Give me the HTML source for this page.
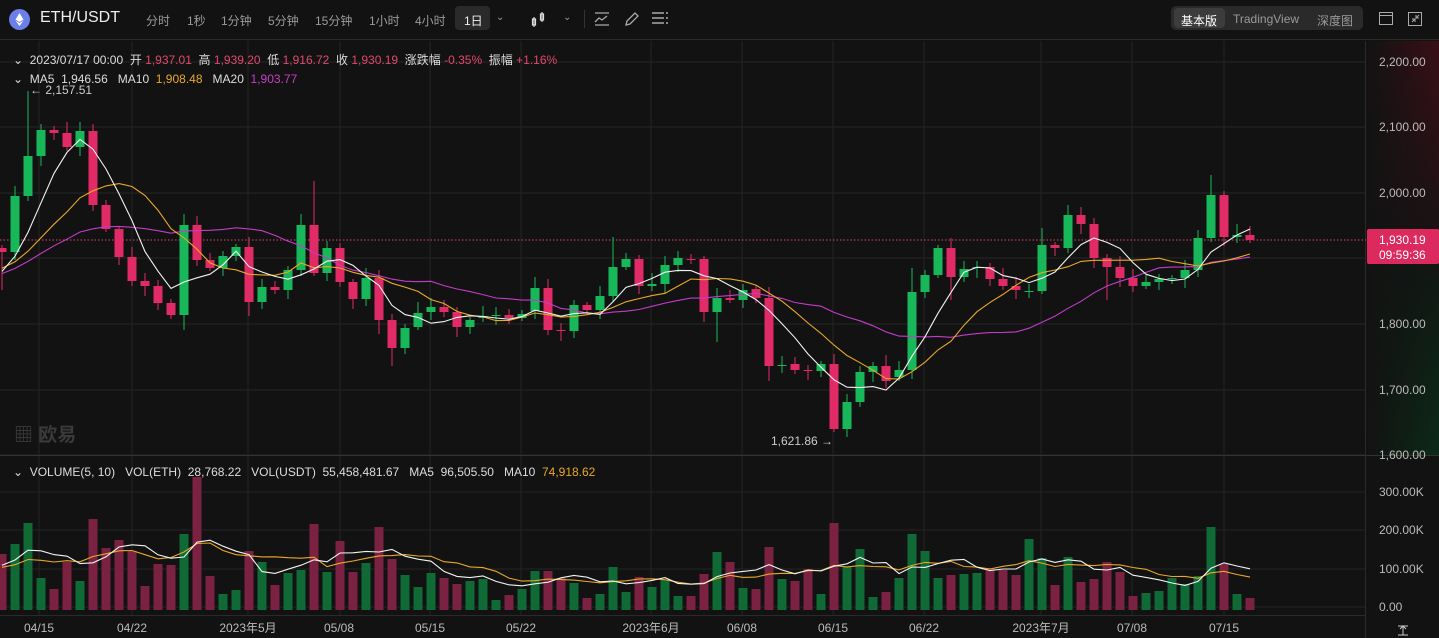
<!DOCTYPE html>
<html><head><meta charset="utf-8"><style>
*{margin:0;padding:0;box-sizing:border-box}
body{width:1439px;height:638px;background:#121212;overflow:hidden;font-family:"Liberation Sans","Noto Sans CJK SC",sans-serif;color:#c8c8c8;position:relative}
.hdr{position:absolute;left:0;top:0;width:1439px;height:40px;border-bottom:1px solid #2a2a2a;font-size:12px}
.hdr span{position:absolute;top:12px;color:#9a9a9a}
.t{position:absolute;font-size:12px;white-space:nowrap}
svg{position:absolute;left:0;top:0}
</style></head><body>
<div class="hdr">
<div style="position:absolute;left:9px;top:9px;width:21px;height:21px;border-radius:50%;background:#6b7fe8"></div>
<svg width="21" height="21" style="left:9px;top:9px"><path d="M10.5 4 L6.5 10.6 L10.5 13 L14.5 10.6Z M10.5 14 L6.5 11.6 L10.5 17 L14.5 11.6Z" fill="#fff"/></svg>
<span style="left:40px;top:9px;font-size:16px;color:#eee">ETH/USDT</span>
<span style="left:146px">分时</span><span style="left:187px">1秒</span><span style="left:221px">1分钟</span><span style="left:268px">5分钟</span><span style="left:315px">15分钟</span><span style="left:369px">1小时</span><span style="left:415px">4小时</span>
<div style="position:absolute;left:455px;top:6px;width:35px;height:24px;background:#2a2a2a;border-radius:4px"></div>
<span style="left:464px;color:#eee">1日</span>
<span style="left:496px;font-size:10px">&#8964;</span>
<svg width="20" height="20" style="left:530px;top:9px"><path d="M4 8v10M2.5 10h3v6h-3z M12 3v10M10.5 5h3v6h-3z" stroke="#ddd" fill="none" stroke-width="1.2"/></svg>
<span style="left:563px;font-size:10px">&#8964;</span>
<div style="position:absolute;left:584px;top:10px;width:1px;height:18px;background:#333"></div>
<svg width="20" height="20" style="left:592px;top:9px"><path d="M3 4h14M3 16h14M3 13l4-4 3 2 5-4" stroke="#aaa" fill="none" stroke-width="1.3"/></svg>
<svg width="20" height="20" style="left:622px;top:9px"><path d="M4 16l1-4 8-8 3 3-8 8z" stroke="#aaa" fill="none" stroke-width="1.3"/></svg>
<svg width="20" height="20" style="left:650px;top:9px"><path d="M2 4h12M2 9h12M2 14h12M16 4h2M16 9h2M16 14h2" stroke="#aaa" stroke-width="1.5"/></svg>
<div style="position:absolute;left:1171px;top:6px;width:192px;height:24px;background:#2a2a2a;border-radius:5px"></div>
<div style="position:absolute;left:1174px;top:8px;width:51px;height:20px;background:#3c3c3c;border-radius:4px"></div>
<span style="left:1181px;color:#fff">基本版</span><span style="left:1233px">TradingView</span><span style="left:1317px">深度图</span>
<svg width="20" height="20" style="left:1377px;top:9px"><rect x="2.5" y="3.5" width="13" height="12" stroke="#aaa" fill="none"/><path d="M2.5 6.5h13" stroke="#aaa"/></svg>
<svg width="20" height="20" style="left:1406px;top:9px"><rect x="2.5" y="3.5" width="13" height="13" stroke="#aaa" fill="none"/><path d="M6 13l3-3M6 10h3v3M13 6l-3 3M10 6v3h3" stroke="#aaa" fill="none"/></svg>
</div>
<svg id="c" width="1439" height="638"></svg>
<div class="t" style="left:13px;top:51px;color:#ddd">&#8964;&nbsp; 2023/07/17 00:00&nbsp; 开 <b style="font-weight:normal;color:#e0476f">1,937.01</b>&nbsp; 高 <b style="font-weight:normal;color:#e0476f">1,939.20</b>&nbsp; 低 <b style="font-weight:normal;color:#e0476f">1,916.72</b>&nbsp; 收 <b style="font-weight:normal;color:#e0476f">1,930.19</b>&nbsp; 涨跌幅 <b style="font-weight:normal;color:#e0476f">-0.35%</b>&nbsp; 振幅 <b style="font-weight:normal;color:#e0476f">+1.16%</b></div>
<div class="t" style="left:13px;top:72px;color:#ddd">&#8964;&nbsp; MA5&nbsp; 1,946.56&nbsp;&nbsp; MA10&nbsp; <b style="font-weight:normal;color:#e9a825">1,908.48</b>&nbsp;&nbsp; MA20&nbsp; <b style="font-weight:normal;color:#c83ec8">1,903.77</b></div>
<div class="t" style="left:30px;top:83px;color:#ccc">&#8592; 2,157.51</div>
<div class="t" style="left:771px;top:434px;color:#ccc">1,621.86 &#8594;</div>
<div class="t" style="left:13px;top:465px;color:#ddd">&#8964;&nbsp; VOLUME(5, 10)&nbsp;&nbsp; VOL(ETH)&nbsp; 28,768.22&nbsp;&nbsp; VOL(USDT)&nbsp; 55,458,481.67&nbsp;&nbsp; MA5&nbsp; 96,505.50&nbsp;&nbsp; MA10&nbsp; <b style="font-weight:normal;color:#e9a825">74,918.62</b></div>
<div class="t" style="left:14px;top:420px;font-size:19px;color:#3a3a3a;font-weight:bold">&#9638; 欧易</div>
<script>
var C=[[0,'r',248,252],[1,'g',196,252],[2,'g',156,196],[3,'g',130,156],[4,'r',130,133],[5,'r',133,147],[6,'g',131,147],[7,'r',131,205],[8,'r',205,229],[9,'r',229,257],[10,'r',257,281],[11,'r',281,286],[12,'r',286,303],[13,'r',303,315],[14,'g',225,315],[15,'r',225,260],[16,'r',260,268],[17,'g',256,268],[18,'g',247,256],[19,'r',247,302],[20,'g',287,302],[21,'r',287,290],[22,'g',270,290],[23,'g',225,270],[24,'r',225,273],[25,'g',248,273],[26,'r',248,282],[27,'r',282,299],[28,'g',278,299],[29,'r',278,320],[30,'r',320,348],[31,'g',328,348],[32,'g',313,327],[33,'g',307,312],[34,'r',307,312],[35,'r',312,327],[36,'g',320,327],[37,'g',316,318],[38,'g',315,316],[39,'r',315,318],[40,'g',314,318],[41,'g',288,311],[42,'r',288,330],[43,'r',330,331],[44,'g',305,331],[45,'r',305,310],[46,'g',296,310],[47,'g',267,296],[48,'g',259,267],[49,'r',259,286],[50,'g',284,286],[51,'g',265,284],[52,'g',258,265],[53,'r',259,260],[54,'r',259,312],[55,'g',298,312],[56,'r',298,300],[57,'g',290,300],[58,'r',289,298],[59,'r',298,366],[60,'g',365,366],[61,'r',364,370],[62,'r',370,371],[63,'g',364,371],[64,'r',364,429],[65,'g',402,429],[66,'g',372,402],[67,'g',366,372],[68,'r',366,381],[69,'g',370,377],[70,'g',292,370],[71,'g',275,292],[72,'g',248,275],[73,'r',248,277],[74,'g',269,277],[75,'g',267,268],[76,'r',267,279],[77,'r',279,286],[78,'r',286,290],[79,'g',291,292],[80,'g',245,291],[81,'r',245,248],[82,'g',215,248],[83,'r',215,224],[84,'r',224,258],[85,'r',258,267],[86,'r',267,278],[87,'r',278,286],[88,'g',282,286],[89,'g',279,282],[90,'g',278,279],[91,'g',270,278],[92,'g',238,270],[93,'g',195,238],[94,'r',195,237],[95,'g',235,237],[96,'r',235,240]];
var V=[554,544,523,578,589,562,581,519,548,540,551,586,564,565,534,477,576,594,590,551,562,585,573,570,524,572,541,572,563,527,559,575,587,573,578,584,581,579,600,595,589,571,571,578,583,598,594,567,592,577,587,580,596,596,574,552,562,588,589,547,579,581,569,594,523,567,549,597,592,578,534,551,578,575,574,573,568,570,575,539,558,585,557,582,579,562,572,596,593,591,578,584,576,527,564,594,598];
var W={2:[91,0],24:[181,0],42:[0,335],47:[237,0],64:[0,432],93:[175,0],54:[0,322],55:[0,342],59:[0,381],14:[0,330],19:[0,316],30:[0,366],29:[0,334],70:[268,0],73:[0,300],80:[228,0],84:[0,268],85:[0,300],0:[0,290]};
var s='',X=i=>2+13*i;
// right panel gradient
s+='<defs><linearGradient id="g" x1="0" y1="0" x2="0" y2="1"><stop offset="0" stop-color="#3a0f17"/><stop offset=".45" stop-color="#1a1214"/><stop offset=".6" stop-color="#101a14"/><stop offset="1" stop-color="#0c2a18"/></linearGradient><linearGradient id="h" x1="0" y1="0" x2="1" y2="0"><stop offset="0" stop-color="#121212"/><stop offset="1" stop-color="#121212" stop-opacity="0"/></linearGradient></defs>';
s+='<rect x="1366" y="41" width="73" height="414" fill="url(#g)"/><rect x="1366" y="41" width="73" height="414" fill="url(#h)"/>';
[62,127,193,258,324,390,455].forEach(y=>s+='<line x1="0" x2="1366" y1="'+y+'" y2="'+y+'" stroke="#262626"/>');
[492,530,569,607].forEach(y=>s+='<line x1="0" x2="1366" y1="'+y+'" y2="'+y+'" stroke="#242424"/>');
[39,132,248,340,430,521,651,742,833,924,1041,1132,1224].forEach(x=>s+='<line y1="41" y2="615" x1="'+x+'" x2="'+x+'" stroke="#242424"/>');
s+='<line x1="0" x2="1439" y1="455.5" y2="455.5" stroke="#333"/><line x1="1365.5" x2="1365.5" y1="41" y2="638" stroke="#2a2a2a"/><line x1="0" x2="1366" y1="615.5" y2="615.5" stroke="#2a2a2a"/>';
s+='<line x1="0" x2="1366" y1="240" y2="240" stroke="#e0476f" stroke-dasharray="1.5 2"/>';
C.forEach(c=>{var i=c[0],x=X(i),col=c[1]=='g'?'#18b85a':'#e02b66',t=c[2],b=c[3];var w=W[i]||[0,0];var wt=w[0]||t-3-(i*7%9),wb=w[1]||b+3+(i*5%8);
s+='<line x1="'+x+'" x2="'+x+'" y1="'+wt+'" y2="'+wb+'" stroke="'+col+'"/>';
s+='<rect x="'+(x-4.5)+'" y="'+t+'" width="9" height="'+Math.max(1,b-t)+'" fill="'+col+'"/>';
var vc=c[1]=='g'?'#0f6a35':'#7b2243';s+='<rect x="'+(x-4.5)+'" y="'+V[i]+'" width="9" height="'+(610-V[i])+'" fill="'+vc+'"/>';});
function ma(arr,n,col,off){var p='';for(var i=0;i<arr.length;i++){var a=0,k=0;for(var j=Math.max(0,i-n+1);j<=i;j++){a+=arr[j];k++}p+=(i?'L':'M')+X(i)+' '+(a/k+(off||0)).toFixed(1)}s+='<path d="'+p+'" stroke="'+col+'" fill="none" stroke-width="1.1"/>';}
var cl=C.map(c=>c[1]=='g'?c[2]:c[3]);var pre=[300,305,300,295,300,298,302,306,300,296,304,300,302,306,300,298,305,300,302,300];
var cl20=pre.concat(cl);
function ma2(arr,n,col,start){var p='';for(var i=start;i<arr.length;i++){var a=0;for(var j=i-n+1;j<=i;j++)a+=arr[j];p+=(i>start?'L':'M')+X(i-start)+' '+(a/n).toFixed(1)}s+='<path d="'+p+'" stroke="'+col+'" fill="none" stroke-width="1.1"/>';}
var pre2=[310,300,295,290,285,280,275,270,268,265,262,260,262,265,268,270,272,275,278,280];
var cl2=pre2.concat(cl);
ma2(cl2,20,'#c23cc8',20);ma2(cl2,10,'#e9a825',20);ma2(cl2,5,'#f2f2f2',20);
var vp=[575,570,575,570,572,575,570,572,575,570].concat(V);
function mv(n,col){var p='';for(var i=10;i<vp.length;i++){var a=0;for(var j=i-n+1;j<=i;j++)a+=vp[j];p+=(i>10?'L':'M')+X(i-10)+' '+(a/n-3).toFixed(1)}s+='<path d="'+p+'" stroke="'+col+'" fill="none" stroke-width="1.1"/>';}
mv(10,'#e9a825');mv(5,'#f2f2f2');
var L=[[62,'2,200.00'],[127,'2,100.00'],[193,'2,000.00'],[324,'1,800.00'],[390,'1,700.00'],[455,'1,600.00']];
L.forEach(l=>s+='<text x="1379" y="'+(l[0]+4)+'" fill="#bbb" font-size="12" font-family="Liberation Sans">'+l[1]+'</text>');
[[492,'300.00K'],[530,'200.00K'],[569,'100.00K'],[607,'0.00']].forEach(l=>s+='<text x="1379" y="'+(l[0]+4)+'" fill="#bbb" font-size="12" font-family="Liberation Sans">'+l[1]+'</text>');
s+='<rect x="1367" y="229" width="72" height="35" rx="2" fill="#dc2a5f"/><text x="1379" y="244" fill="#fff" font-size="12" font-family="Liberation Sans">1,930.19</text><text x="1379" y="259" fill="#fff" font-size="12" font-family="Liberation Sans">09:59:36</text>';
[[39,'04/15'],[132,'04/22'],[248,'2023年5月'],[339,'05/08'],[430,'05/15'],[521,'05/22'],[651,'2023年6月'],[742,'06/08'],[833,'06/15'],[924,'06/22'],[1041,'2023年7月'],[1132,'07/08'],[1224,'07/15']].forEach(l=>s+='<text x="'+l[0]+'" y="632" text-anchor="middle" fill="#bbb" font-size="12" font-family="Liberation Sans, Noto Sans CJK SC, sans-serif">'+l[1]+'</text>');
s+='<path d="M1398 626h10M1403 626v9M1400 629l3-3 3 3M1398 635h10" stroke="#ccc" fill="none"/>';
document.getElementById('c').innerHTML=s;
</script>
</body></html>
